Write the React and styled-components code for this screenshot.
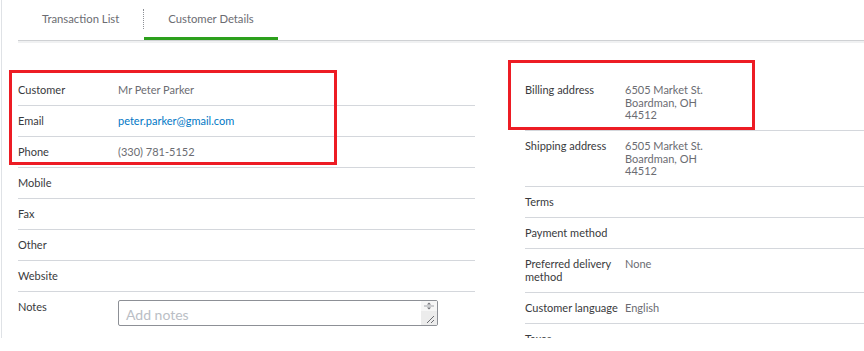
import styled, { createGlobalStyle } from "styled-components";

const GlobalStyle = createGlobalStyle`
    body {
        margin: 0;
        background: #fff;
        font-family: Lato, "Liberation Sans", sans-serif;
    }
`;

const Screen = styled.div`
    position: relative;
    width: 864px;
    height: 351px;
    overflow: hidden;
`;

const Page = styled.div`
    height: 338px;
    margin-left: 1px;
    padding-left: 16px;
    border-left: 1px solid #dfe2e6;
    overflow: hidden;
`;

const TabBar = styled.div`
    display: flex;
    align-items: center;
    height: 40px;
    border-bottom: 1px solid #cfd1d4;
    box-shadow: 0 2px 0 #f0f1f2;
`;

const Tab = styled.div`
    display: flex;
    align-items: center;
    align-self: stretch;
    box-sizing: border-box;
    height: 40px;
    padding: 0 24px;
    font-size: 11.3px;
    color: #6b6c72;
    border-bottom: 3px solid ${({ $active }) => ($active ? "#2ca01c" : "transparent")};
`;

const TabDivider = styled.div`
    width: 0;
    height: 20px;
    margin-top: -2px;
    border-left: 1px dotted #8d9096;
`;

const Columns = styled.div`
    display: grid;
    grid-template-columns: 457px 1fr;
    column-gap: 50px;
    margin-top: 34px;
`;

const Column = styled.div`
    display: flex;
    flex-direction: column;
`;

const Row = styled.div`
    display: grid;
    grid-template-columns: 100px 1fr;
    padding: 9px 0 8.5px;
    font-size: 11px;
    line-height: 12.5px;
    border-bottom: ${({ $last }) => ($last ? "none" : "1px solid #d4d7dc")};
`;

const Label = styled.div`
    color: #393a3d;
    padding-right: 4px;
`;

const Value = styled.div`
    color: ${({ $link }) => ($link ? "#0077c5" : "#6b6c72")};
`;

const NotesBox = styled.div`
    position: relative;
    width: 320px;
    height: 26px;
    margin-top: -1px;
`;

const Notes = styled.textarea`
    display: block;
    box-sizing: border-box;
    width: 100%;
    height: 100%;
    margin: 0;
    padding: 6px 22px 2px 7px;
    border: 1px solid #8d9096;
    border-radius: 2px;
    font-family: Lato, "Liberation Sans", sans-serif;
    font-size: 14px;
    line-height: 16px;
    color: #393a3d;
    overflow: hidden;
    resize: none;

    &::placeholder {
        color: #babec5;
    }
`;

const ScrollStrip = styled.div`
    position: absolute;
    top: 1px;
    right: 1px;
    bottom: 1px;
    width: 16px;
    display: flex;
    flex-direction: column;
    background: #ececec;
    border-radius: 0 1px 1px 0;
    pointer-events: none;
`;

const ScrollArrows = styled.svg`
    display: block;
    background: #f6f6f6;
`;

const Callout = styled.div`
    position: absolute;
    left: ${({ $x }) => $x}px;
    top: ${({ $y }) => $y}px;
    width: ${({ $w }) => $w}px;
    height: ${({ $h }) => $h}px;
    box-sizing: border-box;
    border: 3px solid #ed1c24;
    pointer-events: none;
`;

const contactRows = [
    { label: "Customer", value: "Mr Peter Parker" },
    { label: "Email", value: "peter.parker@gmail.com", link: true },
    { label: "Phone", value: "(330) 781-5152" },
    { label: "Mobile" },
    { label: "Fax" },
    { label: "Other" },
    { label: "Website" },
];

const address = ["6505 Market St.", "Boardman, OH", "44512"];

const detailRows = [
    { label: "Billing address", lines: address },
    { label: "Shipping address", lines: address },
    { label: "Terms" },
    { label: "Payment method" },
    { label: "Preferred delivery method", lines: ["None"] },
    { label: "Customer language", lines: ["English"] },
    { label: "Taxes" },
];

export default function App() {
    return (
        <Screen>
            <GlobalStyle />
            <Page>
                <TabBar>
                    <Tab>Transaction List</Tab>
                    <TabDivider />
                    <Tab $active>Customer Details</Tab>
                </TabBar>

                <Columns>
                    <Column>
                        {contactRows.map(({ label, value, link }) => (
                            <Row key={label}>
                                <Label>{label}</Label>
                                <Value $link={link}>{value}</Value>
                            </Row>
                        ))}
                        <Row $last>
                            <Label>Notes</Label>
                            <NotesBox>
                                <Notes placeholder="Add notes" rows={1} />
                                <ScrollStrip>
                                    <ScrollArrows width="16" height="10" viewBox="0 0 16 10">
                                        <path d="M8 1.5 L10 3.5 L6 3.5 Z" fill="#6b6c72" />
                                        <path d="M3 5 H13" stroke="#a0a3a8" strokeWidth="1" />
                                        <path d="M8 8.5 L10 6.5 L6 6.5 Z" fill="#6b6c72" />
                                    </ScrollArrows>
                                    <svg width="16" height="14" viewBox="0 0 16 14" style={{ marginTop: "auto" }}>
                                        <path d="M6 12 L13 5 M10 12 L13 9" stroke="#6b6c72" strokeWidth="1" />
                                    </svg>
                                </ScrollStrip>
                            </NotesBox>
                        </Row>
                    </Column>

                    <Column>
                        {detailRows.map(({ label, lines = [] }) => (
                            <Row key={label}>
                                <Label>{label}</Label>
                                <Value>
                                    {lines.map((line) => (
                                        <div key={line}>{line}</div>
                                    ))}
                                </Value>
                            </Row>
                        ))}
                    </Column>
                </Columns>
            </Page>

            <Callout $x={9} $y={70} $w={328} $h={95} />
            <Callout $x={508} $y={60} $w={247} $h={70} />
        </Screen>
    );
}
